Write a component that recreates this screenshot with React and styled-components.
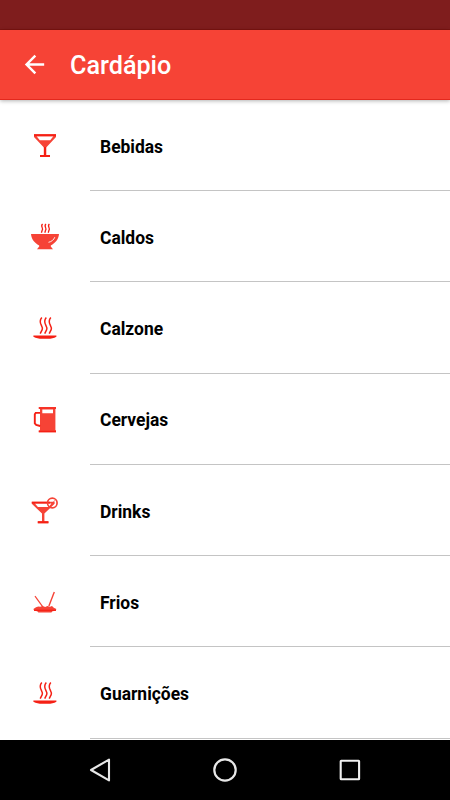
import React from "react";
import styled, { createGlobalStyle } from "styled-components";

const GlobalStyle = createGlobalStyle`
  * { box-sizing: border-box; }
  body { margin: 0; background: #fff; font-family: Roboto, "Noto Sans", sans-serif; }
`;

const Screen = styled.div`
  display: flex;
  flex-direction: column;
  width: 450px;
  height: 800px;
  overflow: hidden;
  background: #fff;
`;

const StatusBar = styled.div`
  flex: none;
  height: 30px;
  background: #7f1d1d;
  border-bottom: 1px solid #7c1310;
`;

const AppBar = styled.header`
  flex: none;
  display: flex;
  align-items: center;
  gap: 20px;
  height: 70px;
  padding-left: 20px;
  background: #f64336;
  border-bottom: 1px solid #e3281d;
  box-shadow: 0 1px 4px rgba(0, 0, 0, 0.3);
  z-index: 1;
`;

const BackButton = styled.button`
  display: flex;
  width: 30px;
  height: 30px;
  padding: 0;
  border: 0;
  background: none;
`;

const Title = styled.h1`
  margin: 0;
  padding-top: 2px;
  color: #fff;
  font-size: 25.2px;
  line-height: 30px;
  font-weight: 500;
`;

const List = styled.ul`
  flex: 1;
  min-height: 0;
  margin: 0;
  padding: 0;
  list-style: none;
  overflow: hidden;
`;

const Row = styled.li`
  display: flex;
  height: 91.22px;
`;

const IconCell = styled.div`
  display: flex;
  justify-content: center;
  width: 90px;
  padding-top: 30px;
`;

const Label = styled.div`
  flex: 1;
  padding: 34.7px 0 0 10px;
  border-bottom: 1px solid #c4c4c4;
  color: #000;
  font-size: 17.45px;
  line-height: 25px;
  font-weight: 700;
`;

const Glyph = styled.svg`
  display: block;
  width: 30px;
  height: 30px;
  overflow: visible;
  fill: ${(p) => p.$fill || "none"};
  stroke: ${(p) => p.$stroke || "none"};
`;

const BackArrow = styled(Glyph)`
  width: 29px;
  height: 29px;
`;

const NavBar = styled.nav`
  flex: none;
  display: flex;
  justify-content: center;
  align-items: center;
  gap: 95px;
  height: 60px;
  background: #000;
`;

const RED = "#f64336";
const EDGE = "#f52015";

const Martini = () => (
  <Glyph viewBox="0 0 30 30" $fill={RED}>
    <path fillRule="evenodd" d="M4 4.3H26V7L16.2 17.4V25H20V27H10V25H13.9V17.4L4 7ZM6.6 6.3L9.8 10.2H20.2L23.4 6.3Z" />
    <path d="M4 4.3H26V6.3H4ZM10 25H20V27H10ZM13.9 17H16.1V26H13.9Z" fill={EDGE} />
  </Glyph>
);

const Soup = () => (
  <Glyph viewBox="0 0 30 30" $fill={RED}>
    <path d="M1 13H29C28.7 18 25.5 22 20.8 24.5V25.5L23 28.3H7L9.2 25.5V24.5C4.5 22 1.3 18 1 13Z" />
    <path d="M18.5 21.3C21.8 20.6 23.7 18.8 24.8 16.2" fill="none" stroke="#fff" strokeWidth="0.9" />
    <path d="M12.6 3C9.8 5.3 14 7.2 12.2 9.2L11.4 11.7M16 3C13.2 5.3 17.4 7.2 15.6 9.2L14.8 11.7M19.4 3C16.6 5.3 20.8 7.2 19 9.2L18.2 11.7" fill="none" stroke={EDGE} strokeWidth="1.3" />
  </Glyph>
);

const HotPlate = () => (
  <Glyph viewBox="0 0 30 30" $fill={EDGE}>
    <path d="M3.4 23.5H26.4V24.7C24 26.3 21 26.7 18 26.7H12C9 26.7 6 26.3 3.4 24.7Z" />
    <path d="M11.8 5.4C6.9 11.1 14 14.1 12.2 17.7L10.2 21.7M16.3 5.4C11.4 11.1 18.5 14.1 16.7 17.7L14.7 21.7M20.8 5.4C15.9 11.1 23 14.1 21.2 17.7L19.2 21.7" fill="none" stroke={EDGE} strokeWidth="1.5" />
  </Glyph>
);

const Beer = () => (
  <Glyph viewBox="0 0 30 30" $fill={RED}>
    <path fillRule="evenodd" d="M8.8 3.2H26V5H25.4V26.3H26V28.2H8.8V26.3H10V5H8.8ZM12.3 5.4V9.3H23V5.4Z" />
    <path d="M8.8 3.2H26V4.6H8.8ZM8.8 26.8H26V28.2H8.8Z" fill={EDGE} />
    <path d="M10.2 8.9H5.7L4.8 10.3V19.3L6.2 20.8L10.2 22" fill="none" stroke={EDGE} strokeWidth="1.9" />
  </Glyph>
);

const Cocktail = () => (
  <Glyph viewBox="0 0 30 30" $fill={RED}>
    <path fillRule="evenodd" d="M1.8 6.8H24.6V8.8L14.4 18.6V26.2H18.4V28.2H7.8V26.2H12V18.6L1.8 8.8ZM4.9 8.5L7.9 11.9H18.5L21.5 8.5Z" />
    <path d="M1.8 6.8H20V8.5H1.8ZM7.8 26.3H18.4V28.2H7.8Z" fill={EDGE} />
    <circle cx="22.3" cy="8" r="4.8" fill="none" stroke={RED} strokeWidth="1.7" />
    <path d="M22.3 8L25.6 4.8M22.3 8L20.4 11.5" fill="none" stroke={RED} strokeWidth="0.7" />
  </Glyph>
);

const Platter = () => (
  <Glyph viewBox="0 0 30 30" $fill={RED}>
    <path d="M3.4 22.9L6 21.2L8.3 20.5L10.3 20.8L12.7 20.1L15.2 20.9L17.4 20.1L20 20.8L22 20.1L23.8 21.7L26.4 23L25.6 24.7L22.5 25.2L21.4 26.4H8.4L7.2 25.2L4.2 24.7Z" />
    <path d="M5 10.2L12.8 20.8" stroke={RED} strokeWidth="1.2" />
    <path d="M24.3 6L18.9 20" stroke={RED} strokeWidth="1.4" />
    <path d="M4 24.3H26" stroke={EDGE} strokeWidth="1.2" />
  </Glyph>
);

const items = [
  ["Bebidas", Martini],
  ["Caldos", Soup],
  ["Calzone", HotPlate],
  ["Cervejas", Beer],
  ["Drinks", Cocktail],
  ["Frios", Platter],
  ["Guarnições", HotPlate],
];

export default function App() {
  return (
    <>
      <GlobalStyle />
      <Screen>
        <StatusBar />
        <AppBar>
          <BackButton aria-label="Voltar">
            <BackArrow viewBox="0 0 24 24" $fill="#fff">
              <path d="M20 11H7.83l5.59-5.59L12 4l-8 8 8 8 1.41-1.41L7.83 13H20v-2z" />
            </BackArrow>
          </BackButton>
          <Title>Cardápio</Title>
        </AppBar>
        <List>
          {items.map(([name, Icon]) => (
            <Row key={name}>
              <IconCell>
                <Icon />
              </IconCell>
              <Label>{name}</Label>
            </Row>
          ))}
        </List>
        <NavBar>
          <Glyph viewBox="0 0 30 30" $stroke="#e8e8e8">
            <path d="M24 4.6V25.4L6 15Z" strokeWidth="2.1" strokeLinejoin="round" />
          </Glyph>
          <Glyph viewBox="0 0 30 30" $stroke="#e8e8e8">
            <circle cx="15" cy="15" r="10.7" strokeWidth="2.2" />
          </Glyph>
          <Glyph viewBox="0 0 30 30" $stroke="#f0f0f0">
            <rect x="5.7" y="5.8" width="18.4" height="18.4" rx="0.5" strokeWidth="2.1" />
          </Glyph>
        </NavBar>
      </Screen>
    </>
  );
}
